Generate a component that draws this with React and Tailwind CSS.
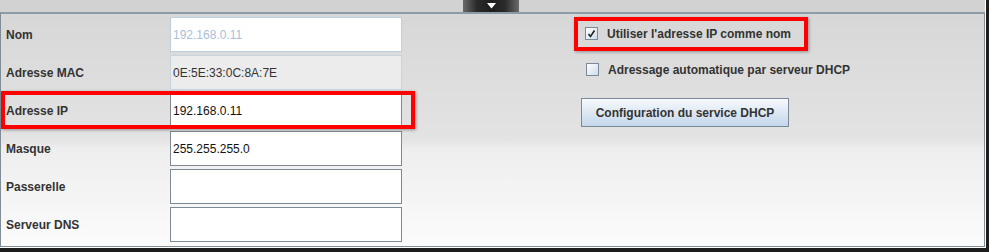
const rows = [
  { label: "Nom", value: "192.168.0.11", kind: "soft" },
  { label: "Adresse MAC", value: "0E:5E:33:0C:8A:7E", kind: "disabled" },
  { label: "Adresse IP", value: "192.168.0.11", kind: "normal" },
  { label: "Masque", value: "255.255.255.0", kind: "normal" },
  { label: "Passerelle", value: "", kind: "normal" },
  { label: "Serveur DNS", value: "", kind: "normal" },
];

function Field({ value, kind }) {
  const styles = {
    soft: "bg-white border-[#b9cfe3] text-[#a9c0d8]",
    disabled: "bg-[#ececec] border-[#c6d5e1] text-[#333333]",
    normal: "bg-white border-[#7d8a94] text-[#111111]",
  };
  return (
    <div
      className={
        "w-[232px] h-[35px] border flex items-center pl-[2px] text-[12px] " +
        styles[kind]
      }
    >
      {value}
    </div>
  );
}

function CheckBox({ checked }) {
  return (
    <div className="w-[13px] h-[13px] border border-[#7a8a99] bg-[linear-gradient(to_bottom_right,#ffffff,#cfdcea)] flex items-center justify-center">
      {checked && (
        <svg width="9" height="9" viewBox="0 0 9 9">
          <path d="M1.5 5 L3.5 7.5 L7.5 1.5" stroke="#222" strokeWidth="1.6" fill="none" />
        </svg>
      )}
    </div>
  );
}

export default function App() {
  return (
    <div
      className="w-[989px] h-[252px] bg-[#1d1d1d] relative overflow-hidden"
      style={{ fontFamily: '"Liberation Sans", Arial, sans-serif' }}
    >
      <div className="w-[986px] h-[248px] bg-white flex flex-col pr-[1px] pb-[1px]">
        {/* Top strip with drop tab */}
        <div className="h-[12px] bg-[#d2d2d2] flex pl-[463px]">
          <div className="w-[56px] h-[12px] bg-[linear-gradient(to_right,#6a6a6a,#2a2a2a_25%,#1e1e1e_50%,#2a2a2a_75%,#6a6a6a)] flex items-center justify-center">
            <svg width="9" height="6" viewBox="0 0 9 6">
              <path d="M0 0 L9 0 L4.5 5.5 Z" fill="#ffffff" />
            </svg>
          </div>
        </div>

        {/* Main panel */}
        <div className="flex-1 border border-t-2 border-[#808d97] border-t-[#8e9ba5] bg-[linear-gradient(to_bottom,#d7d7d7_0%,#e3e3e3_54%,#eeeeee_58%,#fbfbfb_100%)] flex relative">
          {/* Left form */}
          <div className="flex flex-col gap-[3px] pt-[3px] pl-[5px]">
            {rows.map((r) => (
              <div key={r.label} className="flex items-center">
                <div className="w-[164px] text-[12px] font-bold text-[#333333]">
                  {r.label}
                </div>
                <Field value={r.value} kind={r.kind} />
              </div>
            ))}
          </div>

          {/* Right options */}
          <div className="flex flex-col pl-[172px] pt-[3px] text-[12px] font-bold text-[#333333]">
            <div className="h-[33px] flex items-center gap-[9px] pl-[11px]">
              <CheckBox checked />
              <span>Utiliser l'adresse IP comme nom</span>
            </div>
            <div className="h-[39px] flex items-center gap-[9px] pl-[12px]">
              <CheckBox />
              <span>Adressage automatique par serveur DHCP</span>
            </div>
            <div className="pl-[7px] pt-[9px]">
              <button className="w-[208px] h-[29px] border border-[#7a8a99] bg-[linear-gradient(to_bottom,#f7fafd,#c3d6ea)] text-[12px] font-bold text-[#333333]">
                Configuration du service DHCP
              </button>
            </div>
          </div>

          {/* Red annotation boxes */}
          <div className="absolute left-[0px] top-[77px] w-[414px] h-[38px] border-[4px] border-[#ff0000] shadow-[1px_1px_3px_rgba(0,0,0,0.35)]" />
          <div className="absolute left-[573px] top-[3px] w-[234px] h-[34px] border-[4px] border-[#ff0000] shadow-[1px_1px_3px_rgba(0,0,0,0.35)]" />
        </div>
      </div>
    </div>
  );
}
